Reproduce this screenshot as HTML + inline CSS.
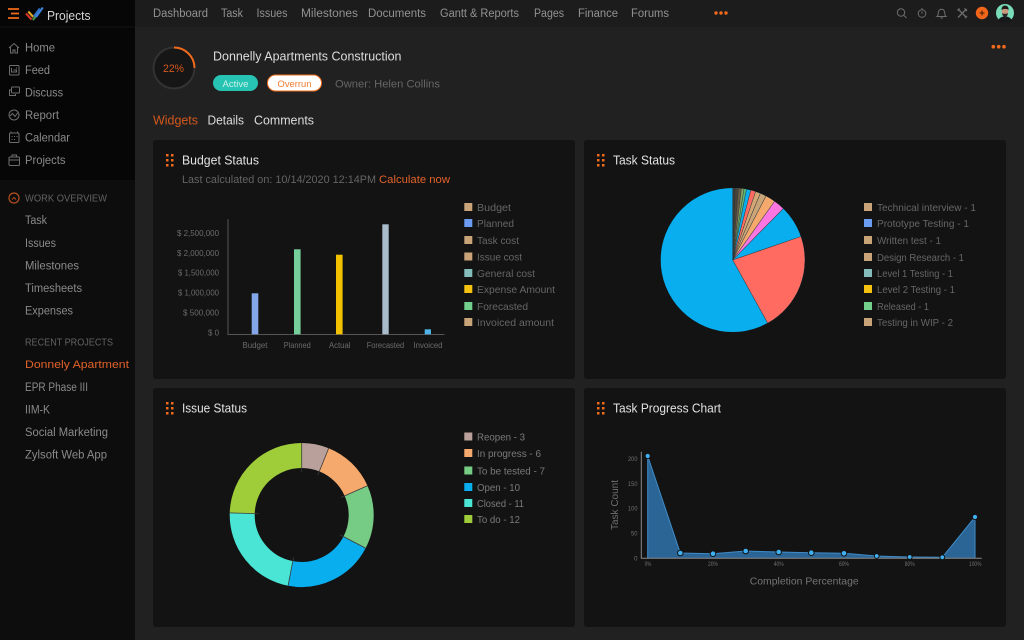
<!DOCTYPE html>
<html lang="en"><head><meta charset="utf-8"><title>Projects</title>
<style>
html,body{margin:0;padding:0;background:#212121;width:1024px;height:640px;overflow:hidden}
svg{display:block;filter:blur(.35px)}
text{font-family:"Liberation Sans",sans-serif}
.n{fill:#929292;font-size:11.5px}
.s{fill:#8a8a8a;font-size:11.5px}
.h{fill:#626262;font-size:10px}
.t{fill:#e2e2e2;font-size:12.5px}
.l{fill:#666;font-size:10.5px}
.a{fill:#6b6b6b;font-size:8px}
.m{fill:#707070;font-size:6px}
.ic{fill:none;stroke:#6e6e6e;stroke-width:1}
</style></head><body>
<svg width="1024" height="640" viewBox="0 0 1024 640" xmlns="http://www.w3.org/2000/svg">
<rect width="1024" height="640" fill="#212121"/>
<rect y="0" width="1024" height="27" fill="#1c1c1c"/>
<rect x="0" y="0" width="135" height="640" fill="#0d0d0d"/>
<rect x="0" y="0" width="135" height="180" fill="#060606"/>
<rect x="0" y="26.5" width="135" height="1" fill="#141414"/>

<!-- logo -->
<g stroke="#f26a1b" stroke-width="1.8" fill="none"><path d="M8 9h11M11 13.5h8M8 18h11"/></g>
<g fill="none" stroke-width="2.1">
<path d="M26 13.500l5.500 6" stroke="#d8352a"/>
<path d="M28.300 11.500l5 5.500" stroke="#e3a926"/>
<path d="M32.800 20l6.500-8" stroke="#3f9d4a"/>
<path d="M33.800 16.500l6-8" stroke="#2f6fc7"/>
<path d="M36 17l6.800-9.500" stroke="#3b82d6"/>
</g>
<text x="47" y="20" class="t" style="fill:#d5d5d5" textLength="43.5" lengthAdjust="spacingAndGlyphs">Projects</text>

<!-- nav -->
<g class="n">
<text x="153" y="17" textLength="55" lengthAdjust="spacingAndGlyphs">Dashboard</text>
<text x="221" y="17" textLength="22" lengthAdjust="spacingAndGlyphs">Task</text>
<text x="256.5" y="17" textLength="31" lengthAdjust="spacingAndGlyphs">Issues</text>
<text x="301" y="17" textLength="57" lengthAdjust="spacingAndGlyphs">Milestones</text>
<text x="368" y="17" textLength="58" lengthAdjust="spacingAndGlyphs">Documents</text>
<text x="440" y="17" textLength="79" lengthAdjust="spacingAndGlyphs">Gantt &amp; Reports</text>
<text x="534" y="17" textLength="30" lengthAdjust="spacingAndGlyphs">Pages</text>
<text x="578" y="17" textLength="40" lengthAdjust="spacingAndGlyphs">Finance</text>
<text x="631" y="17" textLength="38" lengthAdjust="spacingAndGlyphs">Forums</text>
</g>
<g fill="#f26a1b"><circle cx="716" cy="13" r="1.7"/><circle cx="721" cy="13" r="1.7"/><circle cx="726" cy="13" r="1.7"/></g>

<!-- top right icons -->
<g class="ic">
<circle cx="901" cy="12.5" r="3.7"/><path d="M904 15.5l2.5 2.5"/>
<circle cx="922" cy="13.5" r="3.8"/><path d="M922 8v1.5M922 11.5v2.3"/>
<path d="M937 16.5c1.5-1 1-3 1.5-5 .5-1.5 1.5-2.3 3-2.3s2.5.8 3 2.3c.5 2 0 4 1.5 5zM940.5 18h2.5"/>
<path d="M958 9l8.500 8.500M966.500 9L958 17.500M957.500 10.500l2-2M965 18l2-2M964.500 8.500l2.500 2.500" stroke-width="1.3"/>
</g>
<circle cx="982" cy="13" r="6.2" fill="#f2661a"/><path d="M979.500 13h5M982 10.500v5" stroke="#3a1a05" stroke-width="1"/>
<circle cx="1005" cy="13" r="9" fill="#79dcb8"/>
<path d="M998 21c1-3.500 4-4.500 7-4.500s6 1 7 4.500c-2 1.500-4.500 1.500-7 1.500s-5 0-7-1.500z" fill="#15191a"/>
<ellipse cx="1005" cy="11.5" rx="3.3" ry="4.5" fill="#c99a80"/>
<path d="M1001.500 10c0-3 1.500-4.500 3.500-4.500s3.700 1.500 3.700 4.500c-1.500-1.500-5.500-1.500-7.200 0z" fill="#1d1a18"/>
<path d="M1002 13c.5 3 1.500 4 3 4s2.500-1 3-4c-1 1-5 1-6 0z" fill="#2a2624"/>

<!-- sidebar icons -->
<g class="ic">
<path d="M9 48l5-4.500 5 4.500M10.500 47v6h2.500v-3h2v3h2.500v-6"/>
<rect x="9.5" y="65.5" width="9.5" height="9.5" rx="1"/><path d="M11.500 68v4h5v-2h-3M16 68h1"/>
<rect x="11.5" y="87" width="8" height="6" rx="1"/><path d="M11 90H9.500v5.500h6V94"/>
<circle cx="14" cy="115" r="5"/><path d="M10 116l2.500-2.500 2.500 3 3-4"/>
<rect x="9.5" y="133" width="9.5" height="9.5" rx="1"/><path d="M11 131.500v2M17.500 131.500v2M11.500 136.500h1M14 136.500h1M16.500 136.500h1M11.500 139.500h1M14 139.500h1"/>
<rect x="9" y="157" width="10.5" height="8.5" rx="1"/><path d="M12 157v-2h4.500v2M9 160h10.500"/>
</g>
<g class="s">
<text x="25" y="51.5" textLength="30" lengthAdjust="spacingAndGlyphs">Home</text>
<text x="25" y="74" textLength="25" lengthAdjust="spacingAndGlyphs">Feed</text>
<text x="25" y="96.5" textLength="38" lengthAdjust="spacingAndGlyphs">Discuss</text>
<text x="25" y="119" textLength="34" lengthAdjust="spacingAndGlyphs">Report</text>
<text x="25" y="141.5" textLength="45" lengthAdjust="spacingAndGlyphs">Calendar</text>
<text x="25" y="164" textLength="40.5" lengthAdjust="spacingAndGlyphs">Projects</text>
</g>
<circle cx="14" cy="198" r="5" fill="none" stroke="#b5501a" stroke-width="1.2"/><path d="M12 199.500l2-2 2 2" fill="none" stroke="#b5501a"/>
<text x="25" y="201.5" class="h" textLength="82" lengthAdjust="spacingAndGlyphs">WORK OVERVIEW</text>
<g class="s">
<text x="25" y="224" textLength="22" lengthAdjust="spacingAndGlyphs">Task</text>
<text x="25" y="247" textLength="31" lengthAdjust="spacingAndGlyphs">Issues</text>
<text x="25" y="269.5" textLength="54" lengthAdjust="spacingAndGlyphs">Milestones</text>
<text x="25" y="292" textLength="57" lengthAdjust="spacingAndGlyphs">Timesheets</text>
<text x="25" y="314.5" textLength="48" lengthAdjust="spacingAndGlyphs">Expenses</text>
</g>
<text x="25" y="345.5" class="h" textLength="88" lengthAdjust="spacingAndGlyphs">RECENT PROJECTS</text>
<text x="25" y="368" class="s" style="fill:#e2622a;font-size:11px" textLength="104" lengthAdjust="spacingAndGlyphs">Donnely Apartment</text>
<g class="s">
<text x="25" y="391" textLength="63" lengthAdjust="spacingAndGlyphs">EPR Phase III</text>
<text x="25" y="413.5" textLength="25" lengthAdjust="spacingAndGlyphs">IIM-K</text>
<text x="25" y="436" textLength="83" lengthAdjust="spacingAndGlyphs">Social Marketing</text>
<text x="25" y="458.5" textLength="82" lengthAdjust="spacingAndGlyphs">Zylsoft Web App</text>
</g>

<!-- project header -->
<circle cx="174" cy="68" r="20.5" fill="#161616" stroke="#333" stroke-width="2"/>
<circle cx="174" cy="68" r="20.5" fill="none" stroke="#f26a1b" stroke-width="2" pathLength="100" stroke-dasharray="25 100" transform="rotate(-90 174 68)"/>
<text x="163" y="72" style="fill:#d4581c;font-size:11px" textLength="21" lengthAdjust="spacingAndGlyphs">22%</text>
<text x="213" y="60.5" style="fill:#dcdcdc;font-size:13px" textLength="188.500" lengthAdjust="spacingAndGlyphs">Donnelly Apartments Construction</text>
<rect x="213" y="75" width="45" height="16" rx="8" fill="#27c4b4"/>
<text x="222.5" y="87" style="fill:#c9f2ec;font-size:9.5px" textLength="26" lengthAdjust="spacingAndGlyphs">Active</text>
<rect x="267.5" y="75" width="54" height="16" rx="8" fill="#fff" stroke="#f2701f" stroke-width="1"/>
<text x="277.5" y="87" style="fill:#ef7a30;font-size:9.5px" textLength="34" lengthAdjust="spacingAndGlyphs">Overrun</text>
<text x="335" y="87.5" style="fill:#666;font-size:11px" textLength="105" lengthAdjust="spacingAndGlyphs">Owner: Helen Collins</text>
<g fill="#f26a1b"><circle cx="993.3" cy="46.7" r="1.8"/><circle cx="998.7" cy="46.7" r="1.8"/><circle cx="1004" cy="46.7" r="1.8"/></g>

<text x="153" y="124.5" style="fill:#d4581c;font-size:12.5px" textLength="45" lengthAdjust="spacingAndGlyphs">Widgets</text>
<text x="207.5" y="124.5" style="fill:#dcdcdc;font-size:12.5px" textLength="36.5" lengthAdjust="spacingAndGlyphs">Details</text>
<text x="254" y="124.5" style="fill:#dcdcdc;font-size:12.5px" textLength="60" lengthAdjust="spacingAndGlyphs">Comments</text>

<!-- cards -->
<g fill="#131313">
<rect x="153" y="140" width="422" height="239" rx="3"/>
<rect x="584" y="140" width="422" height="239" rx="3"/>
<rect x="153" y="388" width="422" height="239" rx="3"/>
<rect x="584" y="388" width="422" height="239" rx="3"/>
</g>
<g fill="#f26a1b">
<path d="M166 154h2.500v2.500H166zM171 154h2.500v2.500H171zM166 159h2.500v2.500H166zM171 159h2.500v2.500H171zM166 164h2.500v2.500H166zM171 164h2.500v2.500H171z"/>
<path d="M597 154h2.500v2.500H597zM602 154h2.500v2.500H602zM597 159h2.500v2.500H597zM602 159h2.500v2.500H602zM597 164h2.500v2.500H597zM602 164h2.500v2.500H602z"/>
<path d="M166 402h2.500v2.500H166zM171 402h2.500v2.500H171zM166 407h2.500v2.500H166zM171 407h2.500v2.500H171zM166 412h2.500v2.500H166zM171 412h2.500v2.500H171z"/>
<path d="M597 402h2.500v2.500H597zM602 402h2.500v2.500H602zM597 407h2.500v2.500H597zM602 407h2.500v2.500H602zM597 412h2.500v2.500H597zM602 412h2.500v2.500H602z"/>
</g>
<text x="182" y="164.5" class="t" textLength="77" lengthAdjust="spacingAndGlyphs">Budget Status</text>
<text x="613" y="164.5" class="t" textLength="62" lengthAdjust="spacingAndGlyphs">Task Status</text>
<text x="182" y="412.5" class="t" textLength="65" lengthAdjust="spacingAndGlyphs">Issue Status</text>
<text x="613" y="412.5" class="t" textLength="108" lengthAdjust="spacingAndGlyphs">Task Progress Chart</text>
<text x="182" y="183" style="fill:#646464;font-size:11px" textLength="194" lengthAdjust="spacingAndGlyphs">Last calculated on: 10/14/2020 12:14PM</text>
<text x="379" y="183" style="fill:#e2622a;font-size:11px" textLength="71" lengthAdjust="spacingAndGlyphs">Calculate now</text>

<!-- bar chart -->
<path d="M228 219v115.500H444.500" fill="none" stroke="#555" stroke-width="1"/>
<rect x="251.7" y="293.3" width="6.6" height="41" fill="#83a6e8"/>
<rect x="294" y="249.3" width="6.6" height="85" fill="#76cf9a"/>
<rect x="336" y="254.7" width="6.6" height="79.6" fill="#f2c200"/>
<rect x="382.3" y="224.3" width="6.4" height="110" fill="#a9bccb"/>
<rect x="424.7" y="329.3" width="6.3" height="5" fill="#4fb3e8"/>
<g class="a">
<text x="177" y="236" textLength="42" lengthAdjust="spacingAndGlyphs">$ 2,500,000</text>
<text x="177" y="256" textLength="42" lengthAdjust="spacingAndGlyphs">$ 2,000,000</text>
<text x="178" y="275.7" textLength="41" lengthAdjust="spacingAndGlyphs">$ 1,500,000</text>
<text x="178" y="295.7" textLength="41" lengthAdjust="spacingAndGlyphs">$ 1,000,000</text>
<text x="183" y="315.3" textLength="36" lengthAdjust="spacingAndGlyphs">$ 500,000</text>
<text x="208" y="335.3" textLength="11" lengthAdjust="spacingAndGlyphs">$ 0</text>
<text x="242.5" y="348" textLength="25" lengthAdjust="spacingAndGlyphs">Budget</text>
<text x="283.7" y="348" textLength="27" lengthAdjust="spacingAndGlyphs">Planned</text>
<text x="329" y="348" textLength="21.5" lengthAdjust="spacingAndGlyphs">Actual</text>
<text x="366.7" y="348" textLength="37.5" lengthAdjust="spacingAndGlyphs">Forecasted</text>
<text x="413.5" y="348" textLength="29" lengthAdjust="spacingAndGlyphs">Invoiced</text>
</g>

<!-- budget legend -->
<g>
<rect x="464.3" y="203" width="8" height="8" fill="#c9a478"/>
<rect x="464.3" y="219" width="8" height="8" fill="#6b9cf2"/>
<rect x="464.3" y="236" width="8" height="8" fill="#c9a478"/>
<rect x="464.3" y="252.5" width="8" height="8" fill="#c9a478"/>
<rect x="464.3" y="269" width="8" height="8" fill="#85bcbc"/>
<rect x="464.3" y="285" width="8" height="8" fill="#f5c211"/>
<rect x="464.3" y="302" width="8" height="8" fill="#72cf8c"/>
<rect x="464.3" y="318" width="8" height="8" fill="#c9a478"/>
</g>
<g class="l">
<text x="477" y="211" textLength="34" lengthAdjust="spacingAndGlyphs">Budget</text>
<text x="477" y="227" textLength="37" lengthAdjust="spacingAndGlyphs">Planned</text>
<text x="477" y="244" textLength="42" lengthAdjust="spacingAndGlyphs">Task cost</text>
<text x="477" y="260.5" textLength="45" lengthAdjust="spacingAndGlyphs">Issue cost</text>
<text x="477" y="277" textLength="58" lengthAdjust="spacingAndGlyphs">General cost</text>
<text x="477" y="293" textLength="78" lengthAdjust="spacingAndGlyphs">Expense Amount</text>
<text x="477" y="310" textLength="51" lengthAdjust="spacingAndGlyphs">Forecasted</text>
<text x="477" y="326" textLength="77" lengthAdjust="spacingAndGlyphs">Invoiced amount</text>
</g>

<!-- pie -->
<g fill="none" stroke-width="72">
<circle cx="732.7" cy="260" r="36" stroke="#08aeee" pathLength="360" stroke-dasharray="360 360" transform="rotate(-90 732.7 260)"/>
<circle cx="732.7" cy="260" r="36" stroke="#ff6b61" pathLength="360" stroke-dasharray="80 360" transform="rotate(-19 732.7 260)"/>
<circle cx="732.7" cy="260" r="36" stroke="#08aeee" pathLength="360" stroke-dasharray="26.5 360" transform="rotate(-45.5 732.7 260)"/>
<circle cx="732.7" cy="260" r="36" stroke="#fb76e0" pathLength="360" stroke-dasharray="9 360" transform="rotate(-54.5 732.7 260)"/>
<circle cx="732.7" cy="260" r="36" stroke="#f5a96c" pathLength="360" stroke-dasharray="8 360" transform="rotate(-62.5 732.7 260)"/>
<circle cx="732.7" cy="260" r="36" stroke="#c9a478" pathLength="360" stroke-dasharray="5 360" transform="rotate(-67.5 732.7 260)"/>
<circle cx="732.7" cy="260" r="36" stroke="#d3a673" pathLength="360" stroke-dasharray="4 360" transform="rotate(-71.5 732.7 260)"/>
<circle cx="732.7" cy="260" r="36" stroke="#ff6b61" pathLength="360" stroke-dasharray="4 360" transform="rotate(-75.5 732.7 260)"/>
<circle cx="732.7" cy="260" r="36" stroke="#08aeee" pathLength="360" stroke-dasharray="3.5 360" transform="rotate(-79 732.7 260)"/>
<circle cx="732.7" cy="260" r="36" stroke="#58b878" pathLength="360" stroke-dasharray="2 360" transform="rotate(-81 732.7 260)"/>
<circle cx="732.7" cy="260" r="36" stroke="#88a860" pathLength="360" stroke-dasharray="2 360" transform="rotate(-83 732.7 260)"/>
<circle cx="732.7" cy="260" r="36" stroke="#6a5c46" pathLength="360" stroke-dasharray="2.5 360" transform="rotate(-85.5 732.7 260)"/>
<circle cx="732.7" cy="260" r="36" stroke="#4a4438" pathLength="360" stroke-dasharray="2.5 360" transform="rotate(-88 732.7 260)"/>
<circle cx="732.7" cy="260" r="36" stroke="#3a3a38" pathLength="360" stroke-dasharray="2 360" transform="rotate(-90 732.7 260)"/>
</g>
<g stroke="#333" stroke-width=".5">
<path d="M732.7 260V188" transform="rotate(0 732.7 260)"/>
<path d="M732.7 260V188" transform="rotate(2 732.7 260)"/>
<path d="M732.7 260V188" transform="rotate(4.5 732.7 260)"/>
<path d="M732.7 260V188" transform="rotate(7 732.7 260)"/>
<path d="M732.7 260V188" transform="rotate(9 732.7 260)"/>
<path d="M732.7 260V188" transform="rotate(11 732.7 260)"/>
<path d="M732.7 260V188" transform="rotate(14.5 732.7 260)"/>
<path d="M732.7 260V188" transform="rotate(18.5 732.7 260)"/>
<path d="M732.7 260V188" transform="rotate(22.5 732.7 260)"/>
<path d="M732.7 260V188" transform="rotate(27.5 732.7 260)"/>
<path d="M732.7 260V188" transform="rotate(35.5 732.7 260)"/>
<path d="M732.7 260V188" transform="rotate(44.5 732.7 260)"/>
<path d="M732.7 260V188" transform="rotate(71 732.7 260)"/>
<path d="M732.7 260V188" transform="rotate(151 732.7 260)"/>
</g>

<!-- task legend -->
<g>
<rect x="864" y="203" width="8" height="8" fill="#c9a478"/>
<rect x="864" y="219" width="8" height="8" fill="#6b9cf2"/>
<rect x="864" y="236" width="8" height="8" fill="#c9a478"/>
<rect x="864" y="253" width="8" height="8" fill="#c9a478"/>
<rect x="864" y="269" width="8" height="8" fill="#85bcbc"/>
<rect x="864" y="285" width="8" height="8" fill="#f5c211"/>
<rect x="864" y="302" width="8" height="8" fill="#72cf8c"/>
<rect x="864" y="318" width="8" height="8" fill="#c9a478"/>
</g>
<g class="l">
<text x="877" y="211" textLength="99" lengthAdjust="spacingAndGlyphs">Technical interview - 1</text>
<text x="877" y="227" textLength="92" lengthAdjust="spacingAndGlyphs">Prototype Testing - 1</text>
<text x="877" y="244" textLength="64" lengthAdjust="spacingAndGlyphs">Written test - 1</text>
<text x="877" y="261" textLength="87" lengthAdjust="spacingAndGlyphs">Design Research - 1</text>
<text x="877" y="277" textLength="76" lengthAdjust="spacingAndGlyphs">Level 1 Testing - 1</text>
<text x="877" y="293" textLength="78" lengthAdjust="spacingAndGlyphs">Level 2 Testing - 1</text>
<text x="877" y="310" textLength="52" lengthAdjust="spacingAndGlyphs">Released - 1</text>
<text x="877" y="326" textLength="76" lengthAdjust="spacingAndGlyphs">Testing in WIP - 2</text>
</g>

<!-- donut -->
<g fill="none" stroke-width="25">
<circle cx="301.7" cy="515" r="59.5" stroke="#b9a09b" pathLength="360" stroke-dasharray="22 360" transform="rotate(-90 301.7 515)"/>
<circle cx="301.7" cy="515" r="59.5" stroke="#f5a96c" pathLength="360" stroke-dasharray="44 360" transform="rotate(-68 301.7 515)"/>
<circle cx="301.7" cy="515" r="59.5" stroke="#76cc84" pathLength="360" stroke-dasharray="51.4 360" transform="rotate(-24 301.7 515)"/>
<circle cx="301.7" cy="515" r="59.5" stroke="#08aeee" pathLength="360" stroke-dasharray="73.5 360" transform="rotate(27.4 301.7 515)"/>
<circle cx="301.7" cy="515" r="59.5" stroke="#4ae5d5" pathLength="360" stroke-dasharray="80.8 360" transform="rotate(100.9 301.7 515)"/>
<circle cx="301.7" cy="515" r="59.5" stroke="#9fcd3a" pathLength="360" stroke-dasharray="88.3 360" transform="rotate(181.7 301.7 515)"/>
</g>
<g stroke="#3a3a3a" stroke-width=".8">
<path d="M301.7 472V443" transform="rotate(0 301.7 515)"/>
<path d="M301.7 472V443" transform="rotate(22 301.7 515)"/>
<path d="M301.7 472V443" transform="rotate(66 301.7 515)"/>
<path d="M301.7 472V443" transform="rotate(117.4 301.7 515)"/>
<path d="M301.7 472V443" transform="rotate(190.9 301.7 515)"/>
<path d="M301.7 472V443" transform="rotate(271.7 301.7 515)"/>
</g>

<!-- issue legend -->
<g>
<rect x="464.3" y="432.5" width="8" height="8" fill="#b9a09b"/>
<rect x="464.3" y="449" width="8" height="8" fill="#f5a96c"/>
<rect x="464.3" y="466.5" width="8" height="8" fill="#76cc84"/>
<rect x="464.3" y="483" width="8" height="8" fill="#08aeee"/>
<rect x="464.3" y="499" width="8" height="8" fill="#4ae5d5"/>
<rect x="464.3" y="515" width="8" height="8" fill="#9fcd3a"/>
</g>
<g class="l" style="fill:#7a7a7a">
<text x="477" y="440.5" textLength="48" lengthAdjust="spacingAndGlyphs">Reopen - 3</text>
<text x="477" y="457" textLength="64" lengthAdjust="spacingAndGlyphs">In progress - 6</text>
<text x="477" y="474.5" textLength="68" lengthAdjust="spacingAndGlyphs">To be tested - 7</text>
<text x="477" y="491" textLength="43" lengthAdjust="spacingAndGlyphs">Open - 10</text>
<text x="477" y="507" textLength="47" lengthAdjust="spacingAndGlyphs">Closed - 11</text>
<text x="477" y="523" textLength="43" lengthAdjust="spacingAndGlyphs">To do - 12</text>
</g>

<!-- area chart -->
<path d="M647.7 456L680.3 553 713 553.7 745.7 551 778.7 552 811.3 552.7 844 553.3 876.7 556 909.7 557 942.3 557.3 975 517V558.3H647.7Z" fill="#2b6596"/>
<path d="M647.7 558V456L680.3 553 713 553.7 745.7 551 778.7 552 811.3 552.7 844 553.3 876.7 556 909.7 557 942.3 557.3 975 517V558" fill="none" stroke="#3f8cc9" stroke-width="1"/>
<path d="M641.3 451.7V558.3H981.7" fill="none" stroke="#8a8a8a" stroke-width="1"/>
<g fill="#3fb1f2" stroke="#131313" stroke-width="1">
<circle cx="647.7" cy="456" r="2.6"/><circle cx="680.3" cy="553" r="2.8"/><circle cx="713" cy="553.7" r="2.8"/><circle cx="745.7" cy="551" r="2.8"/><circle cx="778.7" cy="552" r="2.8"/><circle cx="811.3" cy="552.7" r="2.8"/><circle cx="844" cy="553.3" r="2.8"/><circle cx="876.7" cy="556" r="2.4"/><circle cx="909.7" cy="557" r="2.4"/><circle cx="942.3" cy="557.3" r="2.4"/><circle cx="975" cy="517" r="2.6"/>
</g>
<g class="m">
<text x="628" y="461" textLength="9.5" lengthAdjust="spacingAndGlyphs">200</text>
<text x="628" y="486" textLength="9.5" lengthAdjust="spacingAndGlyphs">150</text>
<text x="628" y="510.7" textLength="9.5" lengthAdjust="spacingAndGlyphs">100</text>
<text x="631" y="535.7" textLength="6.5" lengthAdjust="spacingAndGlyphs">50</text>
<text x="634" y="560.3" textLength="3.5" lengthAdjust="spacingAndGlyphs">0</text>
<text x="644.7" y="566" textLength="6.5" lengthAdjust="spacingAndGlyphs">0%</text>
<text x="708" y="566" textLength="10" lengthAdjust="spacingAndGlyphs">20%</text>
<text x="773.7" y="566" textLength="10" lengthAdjust="spacingAndGlyphs">40%</text>
<text x="839" y="566" textLength="10" lengthAdjust="spacingAndGlyphs">60%</text>
<text x="904.7" y="566" textLength="10" lengthAdjust="spacingAndGlyphs">80%</text>
<text x="969" y="566" textLength="12.5" lengthAdjust="spacingAndGlyphs">100%</text>
</g>
<text transform="translate(618 530) rotate(-90)" style="fill:#6e6e6e;font-size:10.5px" textLength="50" lengthAdjust="spacingAndGlyphs">Task Count</text>
<text x="749.7" y="584.5" style="fill:#757575;font-size:10.5px" textLength="109" lengthAdjust="spacingAndGlyphs">Completion Percentage</text>
</svg>
</body></html>
